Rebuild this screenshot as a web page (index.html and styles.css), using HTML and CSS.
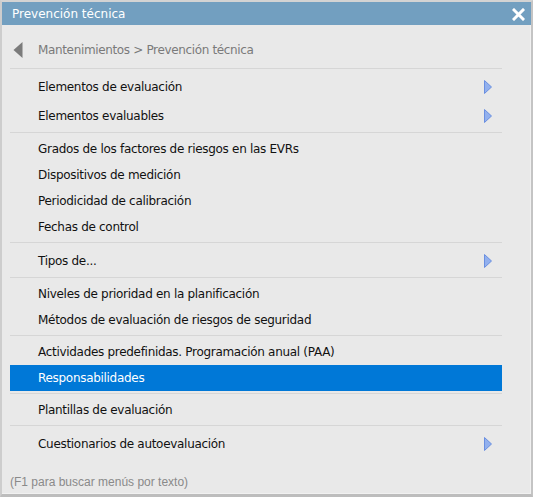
FILE: index.html
```html
<!DOCTYPE html>
<html lang="es">
<head>
<meta charset="utf-8">
<title>Prevención técnica</title>
<link rel="stylesheet" href="styles.css">
</head>
<body>
<div class="window">
  <div class="titlebar">
    <span class="title">Prevención técnica</span>
    <svg class="close" width="13" height="13" viewBox="0 0 13 13"><path d="M2 2 L11 11 M11 2 L2 11" stroke="#fff" stroke-width="3" stroke-linecap="square"/></svg>
  </div>
  <div class="content">
    <div class="crumb">
      <svg class="back" width="10" height="16" viewBox="0 0 10 16"><polygon points="9.5,0 0.5,8 9.5,16" fill="#7b7b7b"/></svg>
      <span class="crumb-text">Mantenimientos &gt; Prevención técnica</span>
    </div>
    <div class="sep"></div>
    <div class="item sub"><span>Elementos de evaluación</span><svg class="arrow" width="8" height="14" viewBox="0 0 8 14"><polygon points="0.5,0.5 7.5,7 0.5,13.5" fill="#92b0ee" stroke="#6a8fe0" stroke-width="1"/></svg></div>
    <div class="item sub"><span>Elementos evaluables</span><svg class="arrow" width="8" height="14" viewBox="0 0 8 14"><polygon points="0.5,0.5 7.5,7 0.5,13.5" fill="#92b0ee" stroke="#6a8fe0" stroke-width="1"/></svg></div>
    <div class="sep"></div>
    <div class="item"><span>Grados de los factores de riesgos en las EVRs</span></div>
    <div class="item"><span>Dispositivos de medición</span></div>
    <div class="item"><span>Periodicidad de calibración</span></div>
    <div class="item"><span>Fechas de control</span></div>
    <div class="sep"></div>
    <div class="item sub"><span>Tipos de...</span><svg class="arrow" width="8" height="14" viewBox="0 0 8 14"><polygon points="0.5,0.5 7.5,7 0.5,13.5" fill="#92b0ee" stroke="#6a8fe0" stroke-width="1"/></svg></div>
    <div class="sep"></div>
    <div class="item"><span>Niveles de prioridad en la planificación</span></div>
    <div class="item"><span>Métodos de evaluación de riesgos de seguridad</span></div>
    <div class="sep"></div>
    <div class="item"><span>Actividades predefinidas. Programación anual (PAA)</span></div>
    <div class="item active"><span>Responsabilidades</span></div>
    <div class="sep"></div>
    <div class="item"><span>Plantillas de evaluación</span></div>
    <div class="sep"></div>
    <div class="item sub"><span>Cuestionarios de autoevaluación</span><svg class="arrow" width="8" height="14" viewBox="0 0 8 14"><polygon points="0.5,0.5 7.5,7 0.5,13.5" fill="#92b0ee" stroke="#6a8fe0" stroke-width="1"/></svg></div>
  </div>
  <div class="footer">(F1 para buscar menús por texto)</div>
</div>
</body>
</html>
```
FILE: styles.css
```css
html, body {
  margin: 0;
  padding: 0;
  background: #c4c4c4;
}
.window {
  width: 533px;
  height: 497px;
  box-sizing: border-box;
  border-top: 2px solid #d3d3d3;
  border-left: 2px solid #cdcdcd;
  border-right: 2px solid #c4c4c4;
  border-bottom: 3px solid #bdbdbd;
  background: #e9e9e9;
  box-shadow: inset -1px -1px 0 #f1f1f1;
  display: flex;
  flex-direction: column;
  font-family: "DejaVu Sans", Verdana, sans-serif;
  font-size: 12px;
  color: #111;
}
.titlebar {
  height: 23px;
  flex: none;
  background: #729fc0;
  display: flex;
  align-items: center;
  justify-content: space-between;
  padding: 0 6px 0 10px;
}
.title {
  color: #fff;
  font-size: 12px;
}
.close {
  display: block;
  margin-top: 1px;
}
.content {
  padding: 0 29px 0 8px;
  display: flex;
  flex-direction: column;
}
.crumb {
  height: 32px;
  margin-top: 9px;
  display: flex;
  align-items: center;
  color: #7a7a7a;
}
.back {
  display: block;
  margin-left: 3px;
}
.crumb-text {
  margin-left: 15px;
  letter-spacing: -0.35px;
}
.sep {
  height: 1px;
  background: #d6d6d6;
  margin: 2px 0 3px;
}
.item {
  height: 26px;
  display: flex;
  align-items: center;
  justify-content: space-between;
  padding: 0 10px 0 28px;
  letter-spacing: -0.3px;
}
.item.sub {
  height: 29px;
}
.item.active {
  background: #0078d7;
  color: #fff;
}
.arrow {
  display: block;
}
.footer {
  margin-top: auto;
  padding: 0 0 4px 8px;
  line-height: 16px;
  font-family: "Liberation Sans", Arial, sans-serif;
  font-size: 12px;
  color: #8a8a8a;
}
```
